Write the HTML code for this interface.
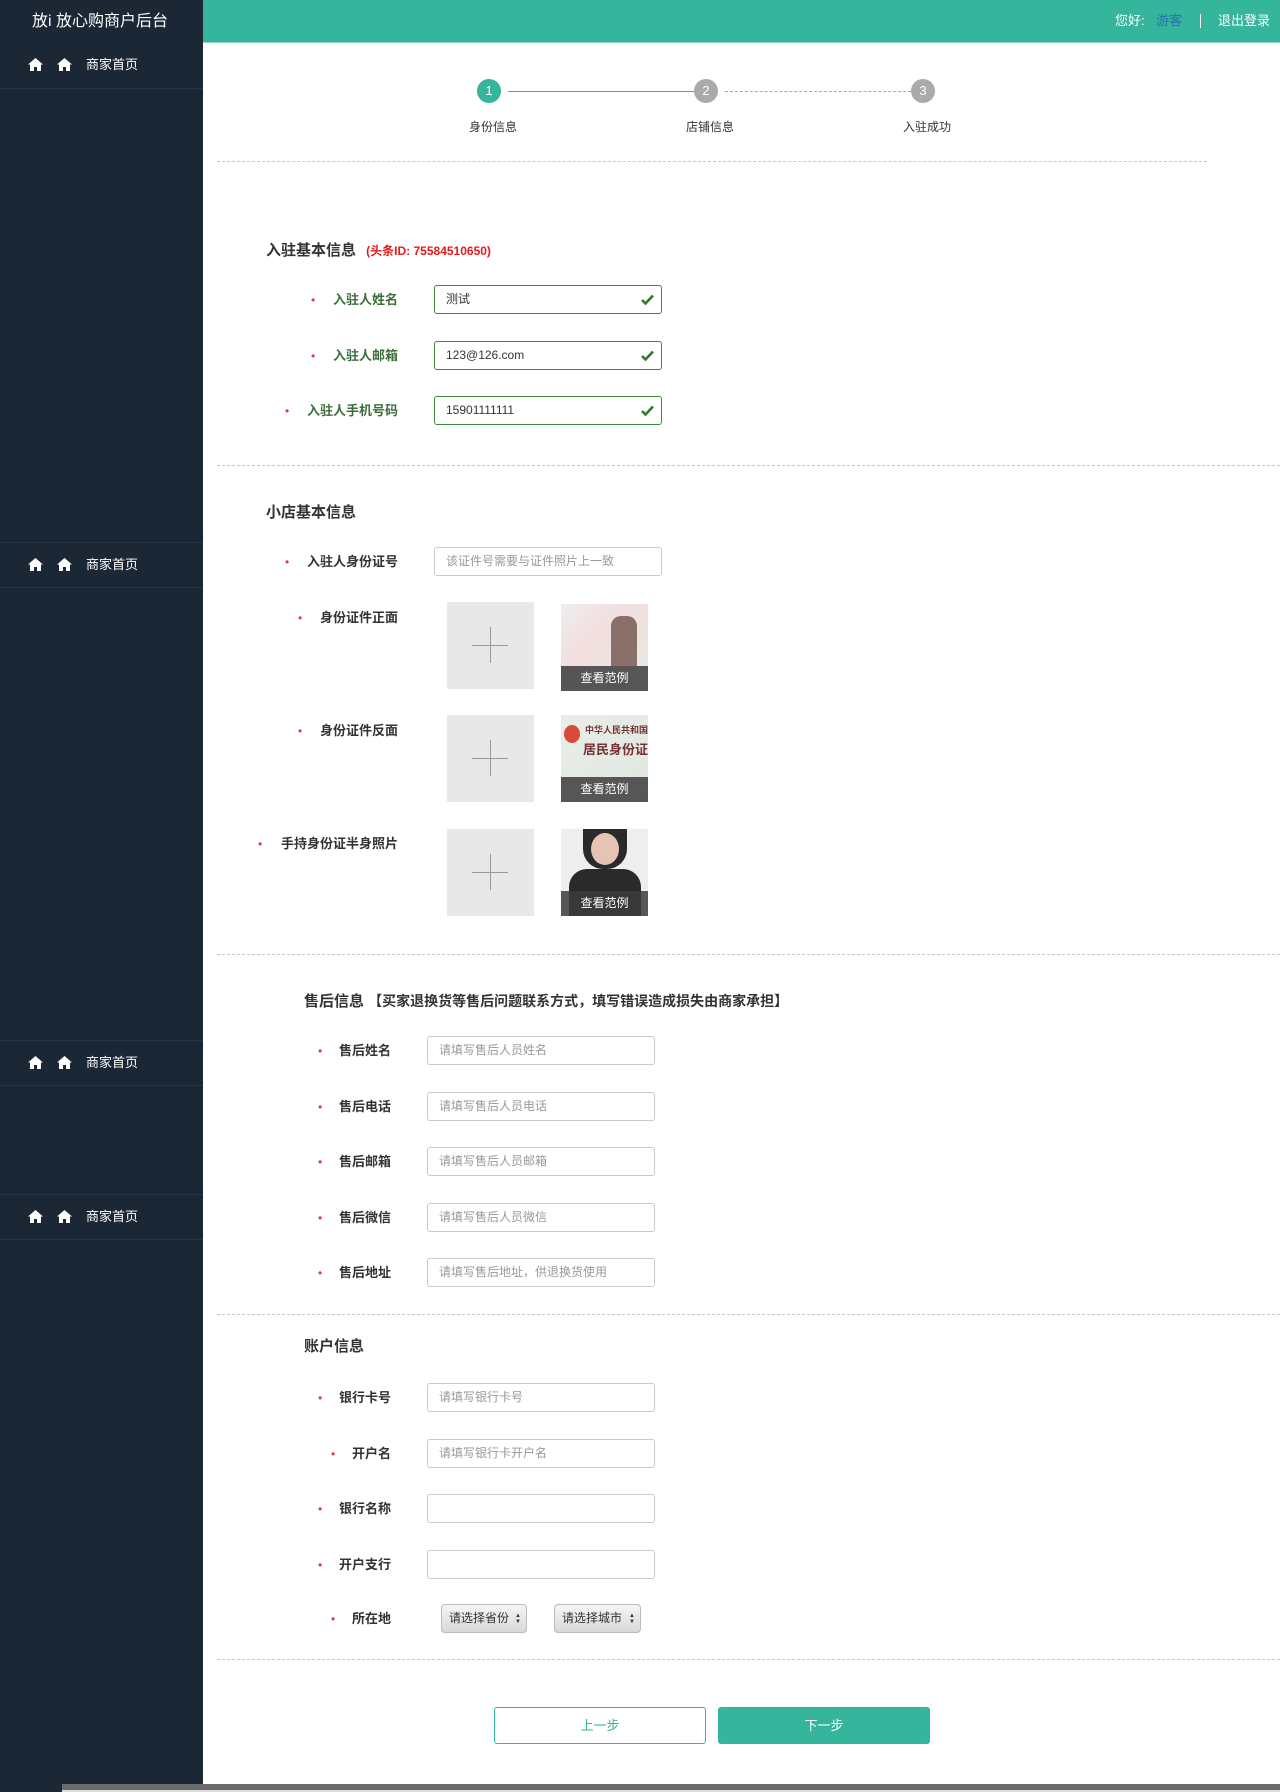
<!DOCTYPE html>
<html><head><meta charset="utf-8"><style>
*{margin:0;padding:0;box-sizing:border-box}
body{width:1280px;height:1792px;position:relative;overflow:hidden;background:#fff;font-family:"Liberation Sans","Noto Sans CJK SC",sans-serif;font-size:13px;color:#333}
.a{position:absolute}
.side{left:0;top:0;width:203px;height:1792px;background:#1b2735}
.hdr{left:203px;top:0;width:1077px;height:43px;background:#34b59c;border-bottom:1px solid #8fd9c9}
.nav{left:0;width:203px;height:46px;border-bottom:1px solid #22384a;border-top:1px solid #22384a;color:#fff;font-size:13px;line-height:44px;padding-left:28px}
.nav svg{vertical-align:-2px;margin-right:14px}
.dot{border-top:1px dashed #c8c8c8;height:0}
.circ{width:24px;height:24px;border-radius:50%;color:#fff;text-align:center;line-height:24px;font-size:13px}
.lbl{text-align:right;font-weight:bold;font-size:13px;line-height:16px}
.star{color:#e4393c;font-size:12px;line-height:16px}
.inp{height:29px;border:1px solid #c9c9c9;border-radius:3px;padding-left:11px;line-height:27px;color:#999;font-size:12px}
.ok{border-color:#3c8a3c;color:#333}
.ok i{position:absolute;right:7px;top:8px;display:block;line-height:0}
.title{font-weight:bold;font-size:15px;line-height:20px;color:#333}
.up{width:87px;height:87px;background:#e8e8e8}
.up:before{content:"";position:absolute;left:25px;top:43px;width:36px;height:1px;background:#999}
.up:after{content:"";position:absolute;left:43px;top:25px;width:1px;height:36px;background:#999}
.ex{width:87px;height:87px;overflow:hidden}
.ex span{position:absolute;left:0;bottom:0;width:87px;height:25px;background:rgba(60,60,60,.85);color:#fff;font-size:12px;text-align:center;line-height:25px}
.sel{height:29px;border:1px solid #bbb;border-radius:4px;background:linear-gradient(#f6f6f6,#d8d8d8);font-size:12px;line-height:27px;padding-left:7px;color:#333;white-space:nowrap}
.sel b{position:absolute;right:5px;top:8px;font-size:6px;line-height:6px;font-weight:normal;color:#333}
</style></head><body>
<div class="a side"></div>
<div class="a" style="left:0;top:0;width:203px;height:43px;color:#fff;font-size:16px;line-height:43px;padding-left:32px">放i 放心购商户后台</div>
<div class="a hdr"></div>
<div class="a" style="left:1115px;top:13px;color:#fff;font-size:13px;line-height:16px">您好: <span style="color:#2a6fb3;margin-left:8px">游客</span></div>
<div class="a" style="left:1200px;top:14px;width:1px;height:14px;background:#fff"></div>
<div class="a" style="left:1218px;top:13px;color:#fff;font-size:13px;line-height:16px">退出登录</div>

<div class="a nav" style="top:43px;border-top:none"><svg width="15" height="13" viewBox="0 0 15 13"><path d="M7.5 0L0 6.5h2V13h4V9h3v4h4V6.5h2z" fill="#fff"/></svg><svg width="15" height="13" viewBox="0 0 15 13"><path d="M7.5 0L0 6.5h2V13h4V9h3v4h4V6.5h2z" fill="#fff"/></svg>商家首页</div>
<div class="a nav" style="top:542px"><svg width="15" height="13" viewBox="0 0 15 13"><path d="M7.5 0L0 6.5h2V13h4V9h3v4h4V6.5h2z" fill="#fff"/></svg><svg width="15" height="13" viewBox="0 0 15 13"><path d="M7.5 0L0 6.5h2V13h4V9h3v4h4V6.5h2z" fill="#fff"/></svg>商家首页</div>
<div class="a nav" style="top:1040px"><svg width="15" height="13" viewBox="0 0 15 13"><path d="M7.5 0L0 6.5h2V13h4V9h3v4h4V6.5h2z" fill="#fff"/></svg><svg width="15" height="13" viewBox="0 0 15 13"><path d="M7.5 0L0 6.5h2V13h4V9h3v4h4V6.5h2z" fill="#fff"/></svg>商家首页</div>
<div class="a nav" style="top:1194px"><svg width="15" height="13" viewBox="0 0 15 13"><path d="M7.5 0L0 6.5h2V13h4V9h3v4h4V6.5h2z" fill="#fff"/></svg><svg width="15" height="13" viewBox="0 0 15 13"><path d="M7.5 0L0 6.5h2V13h4V9h3v4h4V6.5h2z" fill="#fff"/></svg>商家首页</div>

<div class="a" style="left:508px;top:91px;width:186px;height:1px;background:#34b59c"></div>
<div class="a" style="left:725px;top:91px;width:186px;border-top:1px dashed #aaa"></div>
<div class="a circ" style="left:477px;top:79px;background:#34b59c">1</div>
<div class="a circ" style="left:694px;top:79px;background:#aaa">2</div>
<div class="a circ" style="left:911px;top:79px;background:#aaa">3</div>
<div class="a" style="left:469px;top:118px;font-size:12px;color:#333">身份信息</div>
<div class="a" style="left:686px;top:118px;font-size:12px;color:#333">店铺信息</div>
<div class="a" style="left:903px;top:118px;font-size:12px;color:#333">入驻成功</div>
<div class="a dot" style="left:217px;top:161px;width:990px"></div>

<div class="a title" style="left:266px;top:241px">入驻基本信息 <span style="color:#e4191c;font-size:12px;margin-left:6px">(头条ID: 75584510650)</span></div>
<div class="a star" style="left:311px;top:292px">•</div><div class="a lbl" style="left:318px;width:80px;top:292px;color:#3c6e3c">入驻人姓名</div>
<div class="a inp ok" style="left:434px;top:285px;width:228px">测试<i><svg width="13" height="11" viewBox="0 0 13 11"><path d="M1 6l3.5 3.5L12 1.5" stroke="#2f7a2f" stroke-width="2.6" fill="none"/></svg></i></div>
<div class="a star" style="left:311px;top:348px">•</div><div class="a lbl" style="left:318px;width:80px;top:348px;color:#3c6e3c">入驻人邮箱</div>
<div class="a inp ok" style="left:434px;top:341px;width:228px">123@126.com<i><svg width="13" height="11" viewBox="0 0 13 11"><path d="M1 6l3.5 3.5L12 1.5" stroke="#2f7a2f" stroke-width="2.6" fill="none"/></svg></i></div>
<div class="a star" style="left:285px;top:403px">•</div><div class="a lbl" style="left:290px;width:108px;top:403px;color:#3c6e3c">入驻人手机号码</div>
<div class="a inp ok" style="left:434px;top:396px;width:228px">15901111111<i><svg width="13" height="11" viewBox="0 0 13 11"><path d="M1 6l3.5 3.5L12 1.5" stroke="#2f7a2f" stroke-width="2.6" fill="none"/></svg></i></div>
<div class="a dot" style="left:217px;top:465px;width:1063px"></div>

<div class="a title" style="left:266px;top:503px">小店基本信息</div>
<div class="a star" style="left:285px;top:554px">•</div><div class="a lbl" style="left:290px;width:108px;top:554px">入驻人身份证号</div>
<div class="a inp" style="left:434px;top:547px;width:228px">该证件号需要与证件照片上一致</div>
<div class="a star" style="left:298px;top:610px">•</div><div class="a lbl" style="left:300px;width:98px;top:610px">身份证件正面</div>
<div class="a up" style="left:447px;top:602px"></div>
<div class="a ex" style="left:561px;top:604px;background:linear-gradient(135deg,#eee 0%,#f3dede 40%,#e3ece6 100%)"><div class="a" style="left:50px;top:12px;width:26px;height:50px;background:#8a7068;border-radius:10px 10px 0 0"></div><span>查看范例</span></div>
<div class="a star" style="left:298px;top:723px">•</div><div class="a lbl" style="left:300px;width:98px;top:723px">身份证件反面</div>
<div class="a up" style="left:447px;top:715px"></div>
<div class="a ex" style="left:561px;top:715px;background:linear-gradient(135deg,#e8eee8,#dfe8e0)"><div class="a" style="left:3px;top:10px;width:16px;height:18px;background:#d84a3a;border-radius:50%"></div><div class="a" style="left:24px;top:8px;font-size:9px;color:#733;font-weight:bold">中华人民共和国</div><div class="a" style="left:22px;top:24px;font-size:13px;color:#733;font-weight:bold">居民身份证</div><span>查看范例</span></div>
<div class="a star" style="left:258px;top:836px">•</div><div class="a lbl" style="left:270px;width:128px;top:836px">手持身份证半身照片</div>
<div class="a up" style="left:447px;top:829px"></div>
<div class="a ex" style="left:561px;top:829px;background:#eee"><div class="a" style="left:22px;top:0;width:44px;height:40px;background:#2a2a2a;border-radius:0 0 20px 20px"></div><div class="a" style="left:30px;top:4px;width:28px;height:32px;background:#e6c3b2;border-radius:50%"></div><div class="a" style="left:8px;top:40px;width:72px;height:47px;background:#2a2a2a;border-radius:18px 18px 0 0"></div><span>查看范例</span></div>
<div class="a dot" style="left:217px;top:954px;width:1063px"></div>

<div class="a title" style="left:304px;top:991px">售后信息 <span style="font-size:14px">【买家退换货等售后问题联系方式，填写错误造成损失由商家承担】</span></div>
<div class="a star" style="left:318px;top:1043px">•</div><div class="a lbl" style="left:321px;width:70px;top:1043px">售后姓名</div>
<div class="a inp" style="left:427px;top:1036px;width:228px">请填写售后人员姓名</div>
<div class="a star" style="left:318px;top:1099px">•</div><div class="a lbl" style="left:321px;width:70px;top:1099px">售后电话</div>
<div class="a inp" style="left:427px;top:1092px;width:228px">请填写售后人员电话</div>
<div class="a star" style="left:318px;top:1154px">•</div><div class="a lbl" style="left:321px;width:70px;top:1154px">售后邮箱</div>
<div class="a inp" style="left:427px;top:1147px;width:228px">请填写售后人员邮箱</div>
<div class="a star" style="left:318px;top:1210px">•</div><div class="a lbl" style="left:321px;width:70px;top:1210px">售后微信</div>
<div class="a inp" style="left:427px;top:1203px;width:228px">请填写售后人员微信</div>
<div class="a star" style="left:318px;top:1265px">•</div><div class="a lbl" style="left:321px;width:70px;top:1265px">售后地址</div>
<div class="a inp" style="left:427px;top:1258px;width:228px">请填写售后地址，供退换货使用</div>
<div class="a dot" style="left:217px;top:1314px;width:1063px"></div>

<div class="a title" style="left:304px;top:1337px">账户信息</div>
<div class="a star" style="left:318px;top:1390px">•</div><div class="a lbl" style="left:321px;width:70px;top:1390px">银行卡号</div>
<div class="a inp" style="left:427px;top:1383px;width:228px">请填写银行卡号</div>
<div class="a star" style="left:331px;top:1446px">•</div><div class="a lbl" style="left:335px;width:56px;top:1446px">开户名</div>
<div class="a inp" style="left:427px;top:1439px;width:228px">请填写银行卡开户名</div>
<div class="a star" style="left:318px;top:1501px">•</div><div class="a lbl" style="left:321px;width:70px;top:1501px">银行名称</div>
<div class="a inp" style="left:427px;top:1494px;width:228px"></div>
<div class="a star" style="left:318px;top:1557px">•</div><div class="a lbl" style="left:321px;width:70px;top:1557px">开户支行</div>
<div class="a inp" style="left:427px;top:1550px;width:228px"></div>
<div class="a star" style="left:331px;top:1611px">•</div><div class="a lbl" style="left:335px;width:56px;top:1611px">所在地</div>
<div class="a sel" style="left:441px;top:1604px;width:86px">请选择省份<b>▲<br>▼</b></div>
<div class="a sel" style="left:554px;top:1604px;width:87px">请选择城市<b>▲<br>▼</b></div>
<div class="a dot" style="left:217px;top:1659px;width:1063px"></div>

<div class="a" style="left:494px;top:1707px;width:212px;height:37px;border:1px solid #34b59c;border-radius:3px;color:#34b59c;text-align:center;line-height:35px;font-size:13px">上一步</div>
<div class="a" style="left:718px;top:1707px;width:212px;height:37px;background:#34b59c;border-radius:3px;color:#fff;text-align:center;line-height:37px;font-size:13px">下一步</div>

<div class="a" style="left:62px;top:1784px;width:1218px;height:6px;background:#6b6b6b"></div>
<div class="a" style="left:62px;top:1790px;width:1218px;height:2px;background:#ddd"></div>
</body></html>
